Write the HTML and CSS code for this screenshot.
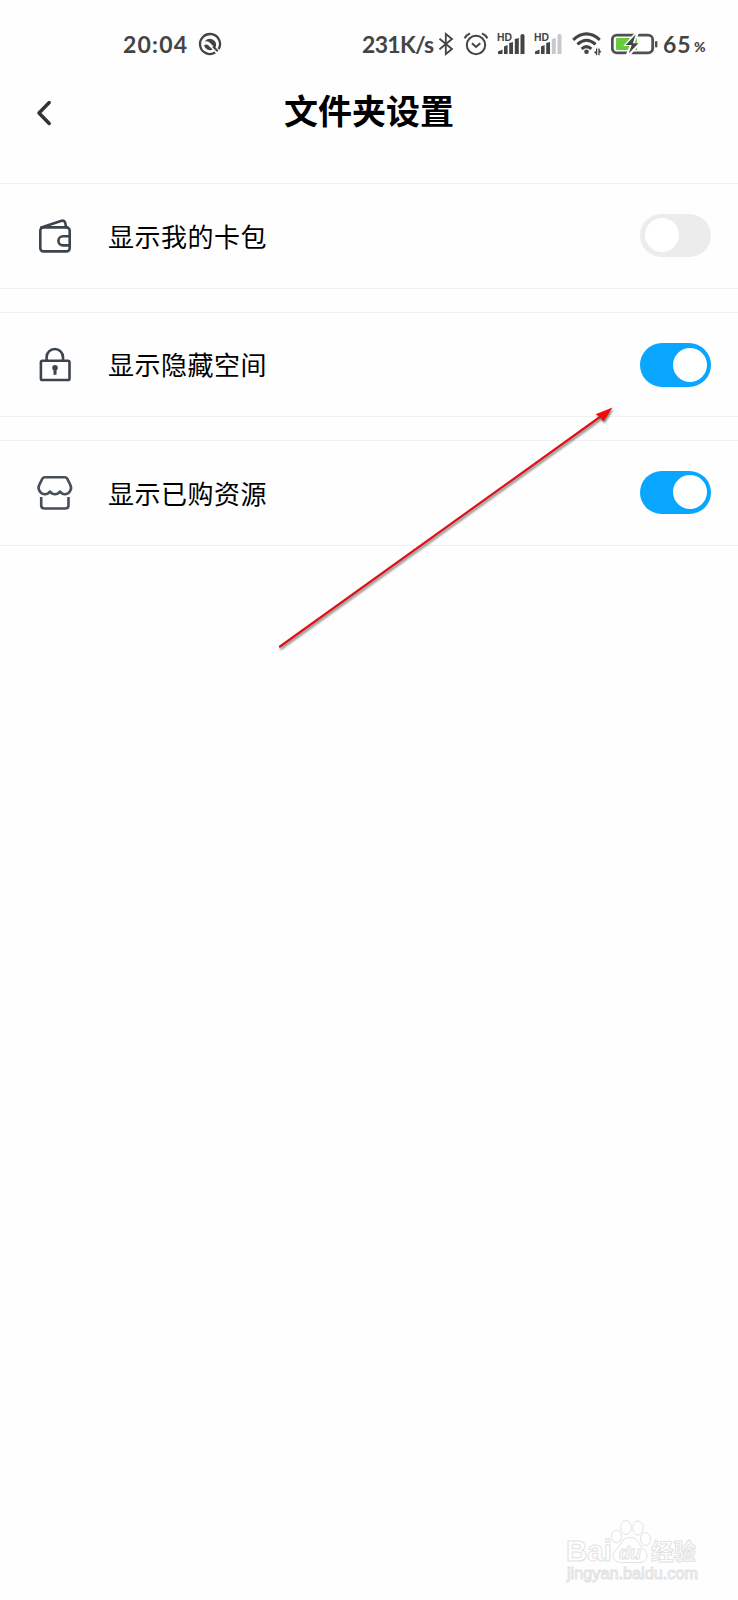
FILE: index.html
```html
<!DOCTYPE html>
<html lang="zh-CN">
<head>
<meta charset="utf-8">
<title>文件夹设置</title>
<link rel="stylesheet" href="styles.css">
</head>
<body>
<div class="screen">
  <div class="status">
    <span class="time">20:04</span>
    <svg class="i-app" width="24" height="24" viewBox="0 0 24 24">
      <path d="M17.2 20.6A10 10 0 1 1 20.6 17.2" fill="none" stroke="#444" stroke-width="2.3"/>
      <path d="M6.6 9.6A6.3 6.3 0 0 1 18 14.2L17 16L11.6 10.4Q9 8.6 6.600 9.600Z" fill="#444"/>
      <path d="M6 13.600Q8.500 11.600 10.500 13.500L14.600 17.600A6.400 6.400 0 0 1 6 13.600Z" fill="#444"/>
      <path d="M15 14.500L19.800 19.300" stroke="#444" stroke-width="2"/>
    </svg>
    <span class="speed">231K/s</span>
    <svg class="i-bt" width="16" height="24" viewBox="0 0 16 24">
      <path d="M1.5 6.8L14 17L7.8 22V2L14 7L1.5 17.2" fill="none" stroke="#444" stroke-width="1.8"/>
    </svg>
    <svg class="i-alarm" width="26" height="26" viewBox="0 0 26 26">
      <circle cx="13" cy="14" r="9.2" fill="none" stroke="#444" stroke-width="2"/>
      <path d="M9 12.3L13 16L17.3 12.3M1.5 7.2Q3.2 4 7 2.3M24.5 7.2Q22.8 4 19 2.3" fill="none" stroke="#444" stroke-width="2"/>
    </svg>
    <svg class="i-sig" width="29" height="24" viewBox="0 0 29 24">
      <text class="hd" x="0" y="9.4" textLength="15" lengthAdjust="spacingAndGlyphs">HD</text>
      <path d="M1 22V19.500L5.500 17.500V22ZM7 22V14.500L10.600 13V22ZM12.200 22V11L16 10V22ZM17.800 22V7L21.800 6V22ZM23.500 22V3.500Q23.500 2 25.500 2T27.500 3.500V22Z" fill="#444"/>
    </svg>
    <svg class="i-sig2" width="29" height="24" viewBox="0 0 29 24">
      <text class="hd" x="0" y="9.4" textLength="15" lengthAdjust="spacingAndGlyphs">HD</text>
      <path d="M1 22V19.500L5.500 17.500V22ZM7 22V14.500L10.600 13V22ZM12.200 22V11L16 10V22Z" fill="#444"/>
      <path d="M17.800 22V7L21.800 6V22ZM23.500 22V3.500Q23.500 2 25.500 2T27.500 3.500V22Z" fill="#c8c8c8"/>
    </svg>
    <svg class="i-wifi" width="30" height="26" viewBox="0 0 30 26">
      <path d="M1.2 8.800Q14.500 -3 27.800 8.800M5.400 13.400Q14.500 5.200 23.600 13.400M9.600 17.800Q14.500 13.400 19.400 17.800" fill="none" stroke="#444" stroke-width="3"/>
      <circle cx="14.500" cy="20.700" r="2.300" fill="#444"/>
      <path d="M24.600 17.500V24.300M27 17.500V24.300" fill="none" stroke="#444" stroke-width="1.300"/>
      <path d="M24.600 20V23.500L21.800 21ZM27 18.500V22L29.600 21Z" fill="#444"/>
    </svg>
    <svg class="i-bat" width="48" height="24" viewBox="0 0 48 24">
      <rect x="1.3" y="3.2" width="40.4" height="17.6" rx="4.5" fill="#fff" stroke="#50504f" stroke-width="2.8"/>
      <path d="M6 6H26V18H6Q5 18 5 17V7Q5 6 6 6Z" fill="#67cc3c"/>
      <path d="M23.6 1L12.2 14.1H18.6L14.5 23.5H19.2L30 10.8H23.7L28 1Z" fill="#fff"/>
      <path d="M24.7 2.4L14.6 13H20.7L17.7 21.4L27.5 11.3H21.8Z" fill="#444"/>
      <rect x="44" y="9" width="2.4" height="6.4" rx="1" fill="#50504f"/>
    </svg>
    <span class="pct">65</span><span class="sign">%</span>
  </div>

  <header class="header">
    <svg class="back" width="18" height="28" viewBox="0 0 18 28"><path d="M14.2 3.6L4 14L14.2 24.4" fill="none" stroke="#333" stroke-width="3.5" stroke-linecap="round" stroke-linejoin="round"/></svg>
    <h1 class="title">文件夹设置</h1>
  </header>

  <main class="list">
    <section class="row">
      <svg class="icon" width="40" height="40" viewBox="0 0 40 40" fill="none" stroke="#3c444e" stroke-width="2.6" stroke-linejoin="round" stroke-linecap="round">
        <rect x="5.3" y="11.4" width="29.4" height="24" rx="3.2"/>
        <path d="M6.2 11.6L26.7 4.8Q29.2 4 30.1 6.5L31.2 11.2M34.5 20.2H28a4.6 4.6 0 0 0 0 9.2H34.5"/>
      </svg>
      <span class="label">显示我的卡包</span>
      <span class="switch"><i class="knob"></i></span>
    </section>
    <section class="row mid">
      <svg class="icon" width="40" height="40" viewBox="0 0 40 40" fill="none" stroke="#3c444e" stroke-width="2.6">
        <rect x="5.9" y="15.8" width="28.600" height="19.200" rx="1.6"/>
        <path d="M11.6 15.4V12.200a8.2 8.2 0 0 1 16.4 0V15.4"/>
        <circle cx="20" cy="22.8" r="2.8" fill="#3c444e" stroke="none"/><path d="M20 23V29.8" stroke-width="3"/>
      </svg>
      <span class="label">显示隐藏空间</span>
      <span class="switch on"><i class="knob"></i></span>
    </section>
    <section class="row">
      <svg class="icon" width="40" height="40" viewBox="0 0 40 40" fill="none" stroke="#454e59" stroke-width="2.6" stroke-linejoin="round">
        <path d="M9.8 4.300H29.800Q31.4 4.300 32.2 5.600L35.1 11.3C37.8 16.2 34 21.3 29.800 21.3Q27 21.3 25 18.6Q23 21.3 20 21.3T15 18.6Q13 21.3 10 21.3C5.6 21.3 1.8 16.2 4.5 11.3L7.4 5.600Q8.2 4.300 9.8 4.300Z"/>
        <path d="M6.2 24V32.3Q6.2 35.5 9.5 35.5H30.2Q33.5 35.5 33.5 32.3V24"/>
      </svg>
      <span class="label">显示已购资源</span>
      <span class="switch on"><i class="knob"></i></span>
    </section>
  </main>

  <svg class="arrow" width="350" height="260" viewBox="270 400 350 260">
    <g class="arrow-shape">
      <path d="M280 646.500L602 415.500" stroke="#df1217" stroke-width="2.2" stroke-linecap="round"/>
      <path d="M612.5 407.5L595.6 414.2L600 417L603.4 421.6Z" fill="#f50a0a"/>
    </g>
  </svg>

  <svg class="mark" width="140" height="74" viewBox="562 1516 140 74">
    <g fill="#fff" stroke="#e2e2e2" stroke-width="1">
      <text class="baidu" x="566" y="1561" textLength="46" lengthAdjust="spacingAndGlyphs">Bai</text>
      <ellipse cx="616.5" cy="1536.5" rx="5" ry="6.3"/>
      <ellipse cx="626" cy="1527.5" rx="5.2" ry="7"/>
      <ellipse cx="638" cy="1528" rx="5.2" ry="7"/>
      <ellipse cx="645.5" cy="1539" rx="5" ry="6.5"/>
      <path d="M630 1537.5C639 1537.5 638 1545 643.5 1549C650 1554 647 1562.5 639.5 1562.5H621.5C613 1562.5 610.5 1554 616.5 1549C622 1545 621 1537.5 630 1537.5Z"/>
      <text class="du" x="619" y="1558.5" textLength="22" lengthAdjust="spacingAndGlyphs">du</text>
      <text class="jy" x="651" y="1559.5" textLength="45" lengthAdjust="spacingAndGlyphs">经验</text>
      <text class="url" x="567" y="1578.5" textLength="131" lengthAdjust="spacingAndGlyphs">jingyan.baidu.com</text>
    </g>
  </svg>
</div>
</body>
</html>
```
FILE: styles.css
```css
body { margin: 0; background: #fefefe; }
.screen {
  position: relative;
  width: 738px;
  height: 1600px;
  overflow: hidden;
  background: #fefefe;
  color: #000;
  font-family: "Noto Sans CJK SC", sans-serif;
}
.status {
  display: flex;
  align-items: center;
  box-sizing: border-box;
  height: 80px;
  padding: 10px 0 0 123px;
  color: #444;
  font-family: Lato, sans-serif;
  font-weight: 700;
  font-size: 23px;
  line-height: 30px;
  white-space: nowrap;
}
.status svg { flex: none; margin-top: -2px; }
.status span { flex: none; margin-top: -2px; }
.time { width: 75px; letter-spacing: 1.2px; }
.speed { width: 76px; margin-left: 140px; letter-spacing: -.7px; }
.status .i-alarm { margin-left: 9px; margin-top: -3px; }
.i-sig { margin-left: 8px; }
.i-sig2 { margin-left: 8px; }
.i-wifi { margin-left: 9px; }
.i-bat { margin-left: 9px; }
.pct { width: 31px; margin-left: 4px; letter-spacing: .8px; }
.sign { font-size: 14px; font-weight: 900; padding-top: 6px; }
.hd { font: 700 11px "Liberation Sans", sans-serif; fill: #444; }
.header {
  display: grid;
  grid-template-columns: 284px 1fr;
  align-items: center;
  height: 64px;
  margin-bottom: 39px;
}
.back { margin-left: 35px; margin-top: 2px; }
.title { margin: 0 0 4px; font-size: 34px; line-height: 50px; font-weight: 700; }
.list { display: flex; flex-direction: column; gap: 23px; }
.row {
  display: flex;
  align-items: center;
  box-sizing: border-box;
  height: 106px;
  padding: 0 27px 0 35px;
  border-top: 1px solid #f0f0f0;
  border-bottom: 1px solid #f0f0f0;
}
.mid { height: 105px; }
.icon { flex: none; }
.label { flex: 1; margin-left: 33px; font-size: 26px; letter-spacing: .5px; line-height: 40px; }
.mid .label { margin-bottom: 2px; }
.switch {
  display: flex;
  align-items: center;
  box-sizing: border-box;
  width: 71px;
  height: 43px;
  margin-bottom: 2px;
  padding: 0 4px 0 5px;
  border-radius: 22px;
  background: #ececec;
}
.on { justify-content: flex-end; background: #08a6ff; }
.mid .switch { margin-bottom: 0; height: 44px; }
.knob { width: 34px; height: 34px; border-radius: 50%; background: #fff; }
.arrow { position: absolute; left: 270px; top: 400px; }
.arrow-shape { filter: drop-shadow(1px 2px 1px rgba(0, 0, 0, .5)); }
.mark { position: absolute; left: 562px; top: 1516px; }
.baidu { font: 700 29px "Liberation Sans", sans-serif; }
.du { font: italic 700 18px "Liberation Sans", sans-serif; }
.jy { font: 700 23px "Noto Sans CJK SC", sans-serif; }
.url { font: 400 16px "Liberation Sans", sans-serif; }
```
